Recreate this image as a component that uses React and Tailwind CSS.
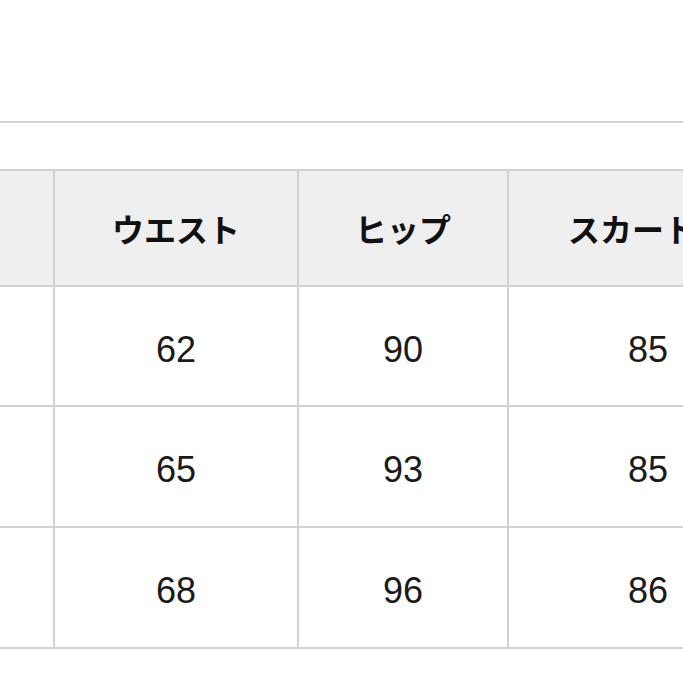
import React from "react";

const headers = ["サイズ", "ウエスト", "ヒップ", "スカート丈"];
const rows = [
  ["S", "62", "90", "85"],
  ["M", "65", "93", "85"],
  ["L", "68", "96", "86"],
];
const heights = ["h-[118px]", "h-[119px]", "h-[119px]"];

export default function App() {
  return (
    <div className="w-[683px] h-[683px] overflow-hidden bg-white">
      <div className="h-[121px]" />
      <div className="h-[2px] w-full bg-[#d4d4d4]" />
      <div className="h-[46px]" />
      <div className="ml-[-191px] w-max grid grid-cols-[242px_242px_208px_278px] gap-[2px] p-[2px] bg-[#d2d2d2]">
        {headers.map((h) => (
          <div
            key={h}
            className="h-[114px] bg-[#efefef] flex items-center justify-center text-[32px] font-bold text-[#111111] leading-none"
            style={{ fontFamily: '"Noto Sans CJK JP", "Noto Sans", sans-serif' }}
          >
            {h}
          </div>
        ))}
        {rows.map((r, i) =>
          r.map((c, j) => (
            <div
              key={i + "-" + j}
              className={`${heights[i]} bg-white flex items-center justify-center pt-[7px] text-[36px] text-[#1a1a1a] leading-none`}
              style={{ fontFamily: '"Liberation Sans", Arial, sans-serif' }}
            >
              {c}
            </div>
          ))
        )}
      </div>
    </div>
  );
}
